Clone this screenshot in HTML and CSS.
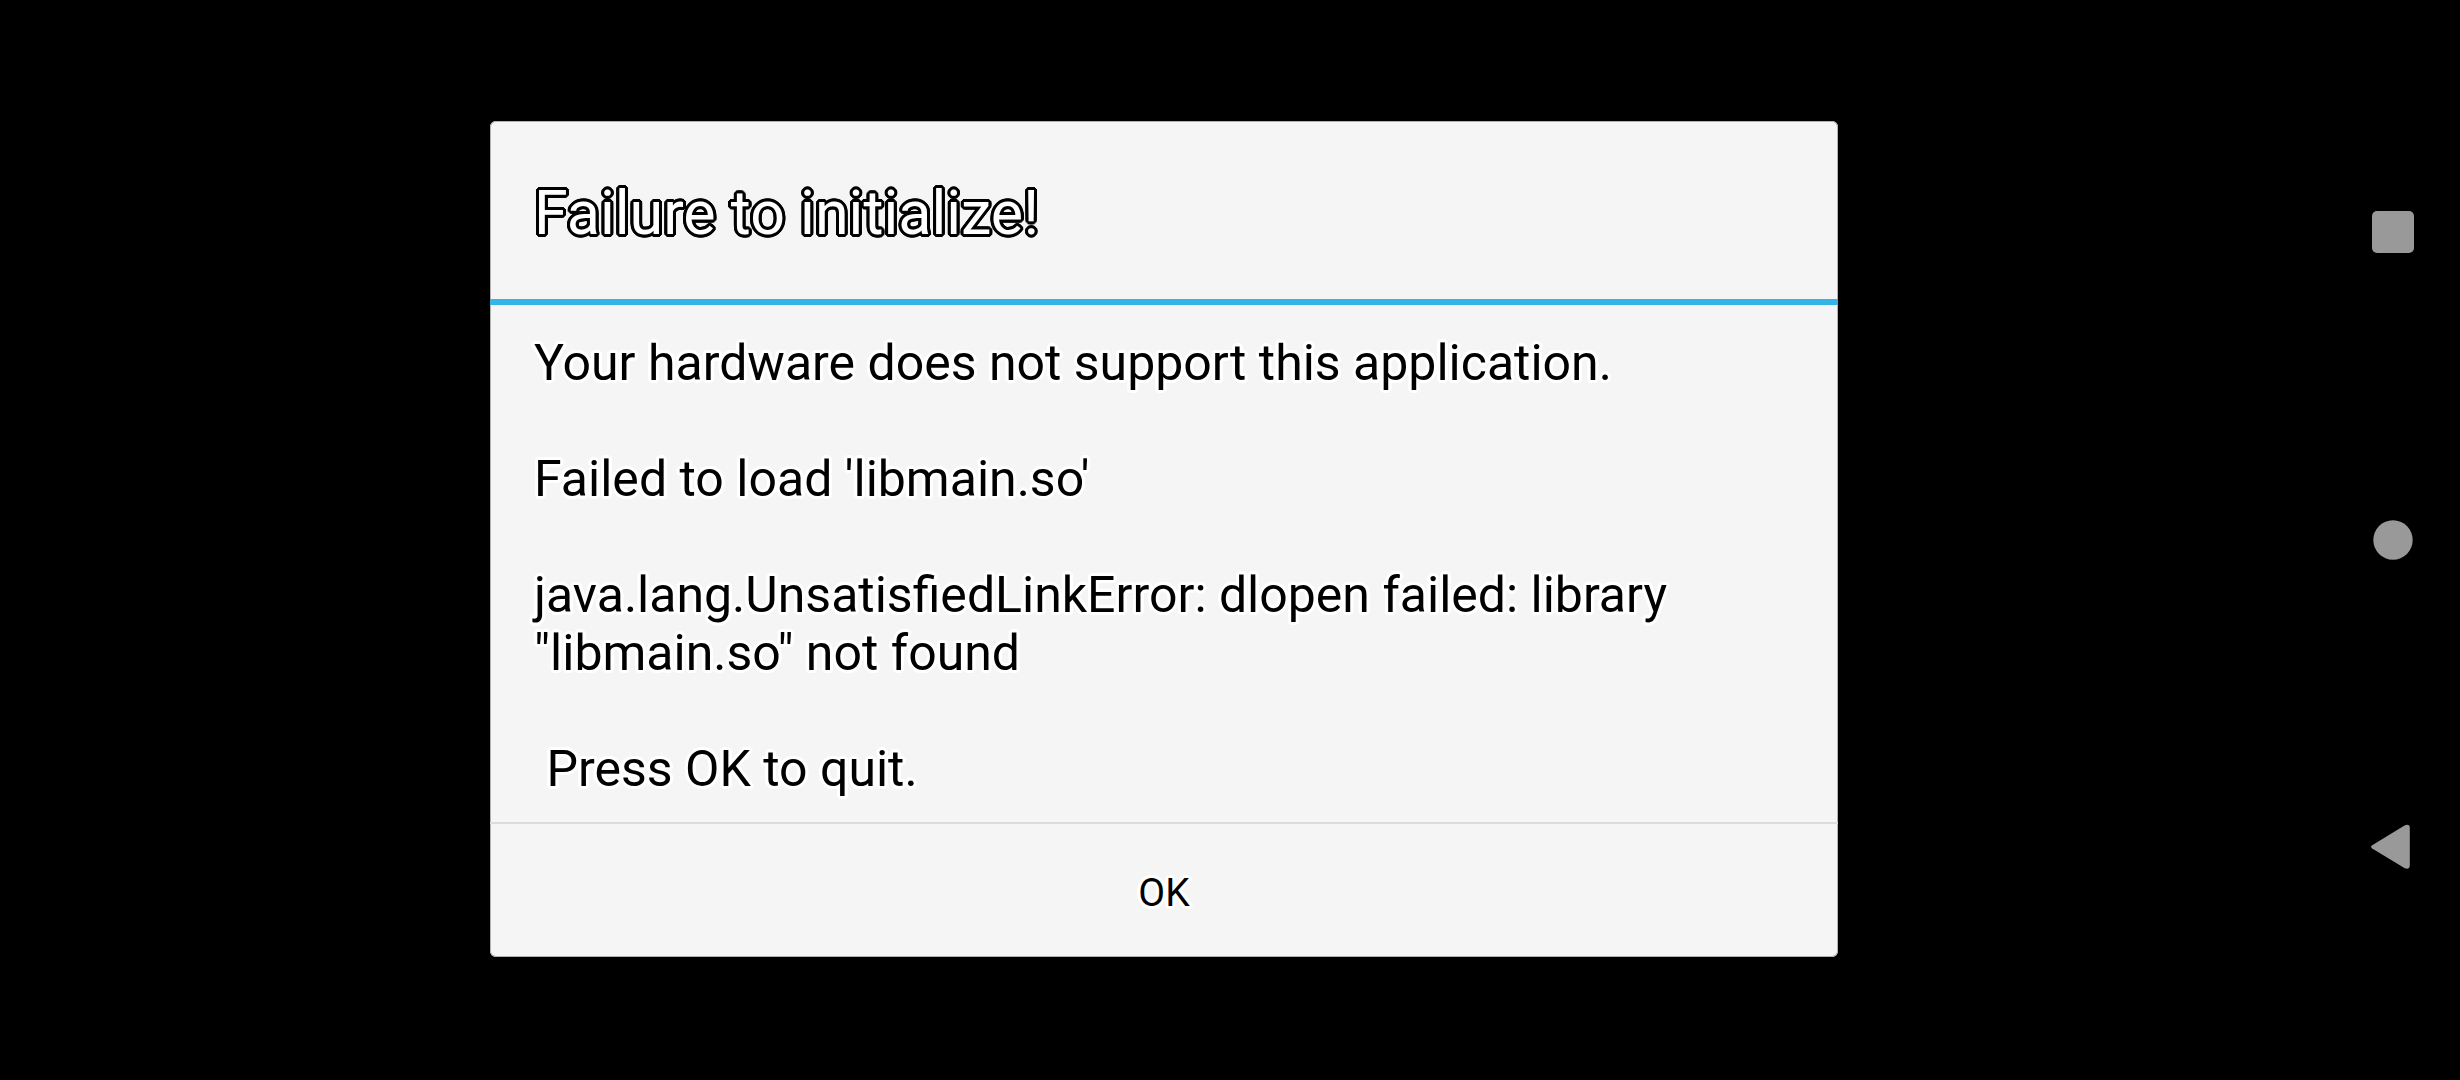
FILE: index.html
```html
<!DOCTYPE html>
<html lang="en">
<head>
    <meta charset="UTF-8">
    <meta name="viewport" content="width=device-width, initial-scale=1.0">
    <title>Failure to initialize!</title>
    <link rel="stylesheet" href="styles.css">
</head>
<body>
    <main class="screen">
        <section class="dialog" role="alertdialog" aria-labelledby="dialog-title" aria-describedby="dialog-message">
            <h1 class="dialog-title" id="dialog-title">Failure to initialize!</h1>
            <p class="dialog-message" id="dialog-message">Your hardware does not support this application.

Failed to load 'libmain.so'

java.lang.UnsatisfiedLinkError: dlopen failed: library "libmain.so" not found

 Press OK to quit.</p>
            <button class="dialog-button" type="button">OK</button>
        </section>
    </main>

    <nav class="navbar">
        <button class="nav-button" type="button" aria-label="Recents">
            <svg width="48" height="48" viewBox="0 0 48 48"><rect x="3" y="3" width="42" height="42" rx="5"/></svg>
        </button>
        <button class="nav-button" type="button" aria-label="Home">
            <svg width="48" height="48" viewBox="0 0 48 48"><circle cx="24" cy="24" r="19.7"/></svg>
        </button>
        <button class="nav-button" type="button" aria-label="Back">
            <svg width="48" height="48" viewBox="0 0 48 48"><path d="M3.2 21.2 35.5 1.4Q40.8-.5 40.8 4V41Q40.8 46 35.8 44.2L3.2 24.4Q.8 22.8 3.2 21.2Z"/></svg>
        </button>
    </nav>
</body>
</html>
```

FILE: styles.css
```css
* { box-sizing: border-box; }
body { margin: 0; min-height: 100vh; display: flex; background: #000; font-family: Roboto, sans-serif; color: #000; }
button { font-family: inherit; color: inherit; border: 0; background: none; cursor: pointer; }

.screen { flex: 1; display: flex; align-items: center; justify-content: center; padding: 0 0 2px 2px; }

/* --outline is the colour of the 3px edge round the letters */
.dialog { --outline: #fff; width: 58%; background: #f5f5f5; border-radius: 6px; box-shadow: inset 0 0 0 1px #b0b0b0; }
.dialog-title, .dialog-message, .dialog-button {
    text-shadow:
        3px 0 var(--outline), -3px 0 var(--outline), 0 3px var(--outline), 0 -3px var(--outline),
        3px 1px var(--outline), 3px -1px var(--outline), -3px 1px var(--outline), -3px -1px var(--outline),
        1px 3px var(--outline), 1px -3px var(--outline), -1px 3px var(--outline), -1px -3px var(--outline),
        2px 2px var(--outline), 2px -2px var(--outline), -2px 2px var(--outline), -2px -2px var(--outline);
}
.dialog-title { --outline: #000; margin: 0; padding: 56px 44px 50px; border-bottom: 6px solid #33b5e5; font-size: 61px; line-height: 72px; font-weight: 400; color: #fff; }
.dialog-message { margin: 0; padding: 29px 44px 24px; font-size: 50px; line-height: 58px; white-space: pre-wrap; }
.dialog-button { display: block; width: 100%; padding: 46px 44px 41px; border-top: 2px solid #dcdcdc; font-size: 39px; line-height: 46px; }

.navbar { width: 134px; display: flex; flex-direction: column; align-items: center; justify-content: space-between; padding: 208px 0; }
.nav-button { padding: 0; }
.nav-button svg { display: block; fill: #999; }
```
